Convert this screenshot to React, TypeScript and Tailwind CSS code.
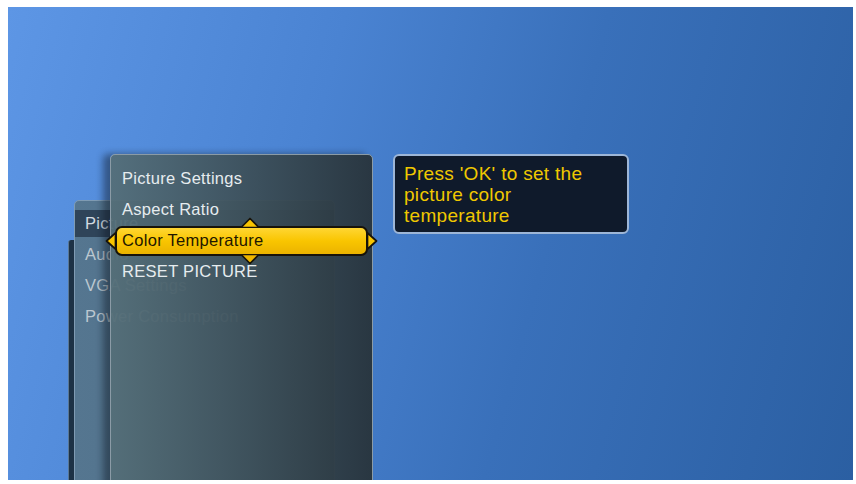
export default function App() {
  const font = { fontFamily: '"Liberation Sans", Arial, sans-serif' };

  return (
    <div className="w-[856px] h-[484px] bg-white pt-[7px] pl-[8px]" style={font}>
      <div className="w-[845px] h-[473px] overflow-hidden flex items-start bg-[linear-gradient(105deg,#5d96e5_0%,#4a83d2_35%,#3970ba_62%,#2b5fa2_100%)]">
        {/* far back menu edge */}
        <div className="ml-[60px] mt-[233px] w-[6px] h-[300px] shrink-0 bg-[#1d3246] rounded-tl-[3px] border-l border-[#5a7896]" />

        {/* main menu (behind) */}
        <div className="mt-[193px] w-[261px] h-[300px] shrink-0 bg-[linear-gradient(to_right,#557690,#4a6a84)] rounded-tl-[5px] rounded-tr-[5px] border border-[#7f9bb3] pt-[9px] flex flex-col gap-[4px] text-[16.5px] tracking-[0.3px] text-[#bcc8d1]">
          <div className="h-[27px] flex items-center pl-[10px] bg-[#2f4459] text-[#d3dbe1]">Picture</div>
          <div className="h-[27px] flex items-center pl-[10px]">Audio</div>
          <div className="h-[27px] flex items-center pl-[10px]">VGA Settings</div>
          <div className="h-[27px] flex items-center pl-[10px]">Power Consumption</div>
        </div>

        {/* sub menu */}
        <div className="-ml-[225px] mt-[147px] w-[263px] h-[340px] shrink-0 rounded-tl-[5px] rounded-tr-[5px] border border-[#8b9ba6] bg-[linear-gradient(to_right,rgba(84,110,120,0.95),rgba(64,84,94,0.95)_45%,rgba(40,52,60,0.96))] shadow-[-7px_0_7px_rgba(10,20,30,0.45)] pt-[8px] text-[16.5px] tracking-[0.3px]">
          <div className="h-[31px] flex items-center pl-[11px] text-[#e6ecef]">Picture Settings</div>
          <div className="h-[31px] flex items-center pl-[11px] text-[#e6ecef]">Aspect Ratio</div>
          <div className="h-[31px] flex items-center px-[4px]">
            <div className="relative w-full h-[30px] flex items-center pl-[5px] rounded-[7px] border-2 border-[#17130a] bg-[linear-gradient(to_bottom,#ffd633,#f9c500_50%,#ebb300)] text-[#1e1700]">
              Color Temperature
              <svg className="absolute left-[123px] -top-[11px]" width="20" height="11" viewBox="0 0 20 11">
                <polygon points="1,10.5 10,1.5 19,10.5" fill="#f9c500" stroke="#17130a" strokeWidth="1.7" strokeLinejoin="round" />
              </svg>
              <svg className="absolute left-[123px] -bottom-[11px]" width="20" height="11" viewBox="0 0 20 11">
                <polygon points="1,0.5 10,9.5 19,0.5" fill="#eeb600" stroke="#17130a" strokeWidth="1.7" strokeLinejoin="round" />
              </svg>
              <svg className="absolute -left-[12px] top-[4px]" width="11" height="18" viewBox="0 0 11 18">
                <polygon points="10.5,1 1.5,9 10.5,17" fill="#f9c500" stroke="#17130a" strokeWidth="1.7" strokeLinejoin="round" />
              </svg>
              <svg className="absolute -right-[12px] top-[4px]" width="11" height="18" viewBox="0 0 11 18">
                <polygon points="0.5,1 9.5,9 0.5,17" fill="#f9c500" stroke="#17130a" strokeWidth="1.7" strokeLinejoin="round" />
              </svg>
            </div>
          </div>
          <div className="h-[31px] flex items-center pl-[11px] text-[#e6ecef]">RESET PICTURE</div>
        </div>

        {/* help box */}
        <div className="ml-[20px] mt-[147px] w-[236px] h-[80px] shrink-0 rounded-[6px] border-2 border-[#9db6d7] bg-[#0f1a2b] pt-[7px] pl-[9px] text-[19px] leading-[21px] tracking-[0.3px] text-[#f0c800]">
          Press 'OK' to set the
          <br />
          picture color
          <br />
          temperature
        </div>
      </div>
    </div>
  );
}
